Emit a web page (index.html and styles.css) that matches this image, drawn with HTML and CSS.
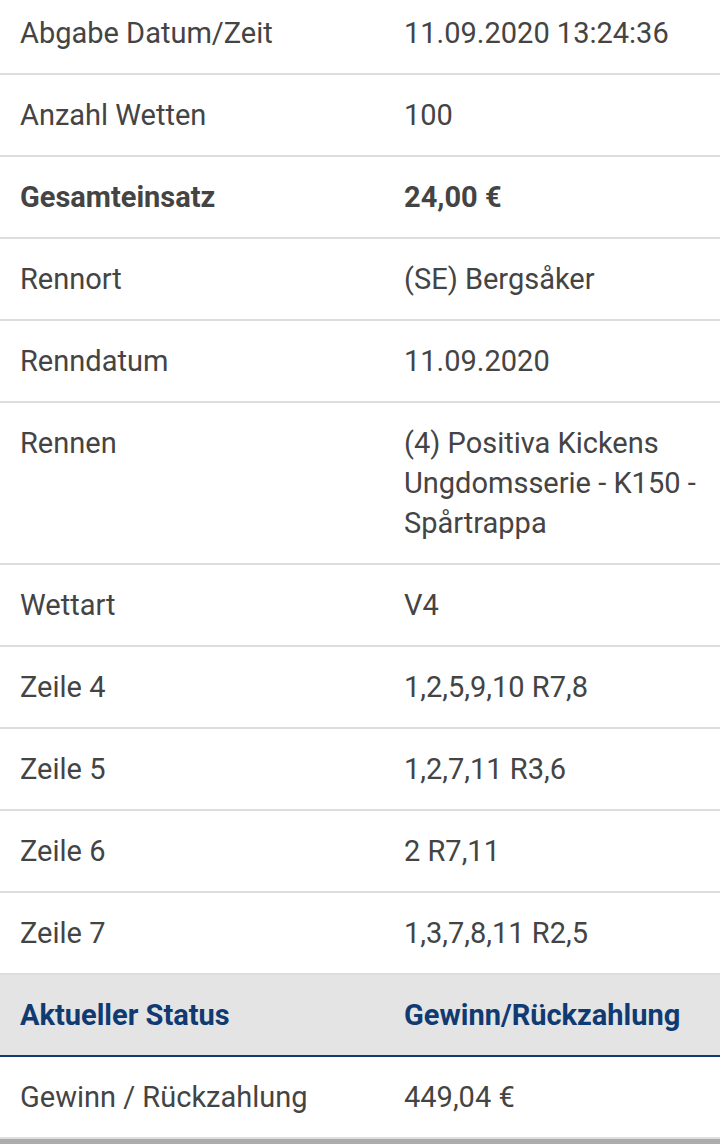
FILE: index.html
```html
<!DOCTYPE html>
<html lang="de">
<head>
<meta charset="utf-8">
<title>Wettschein</title>
<link rel="stylesheet" href="styles.css">
</head>
<body>
<div class="sheet">
  <div class="row"><div class="cell">Abgabe Datum/Zeit</div><div class="cell">11.09.2020 13:24:36</div></div>
  <div class="row"><div class="cell">Anzahl Wetten</div><div class="cell">100</div></div>
  <div class="row bold"><div class="cell">Gesamteinsatz</div><div class="cell">24,00 €</div></div>
  <div class="row"><div class="cell">Rennort</div><div class="cell">(SE) Bergsåker</div></div>
  <div class="row"><div class="cell">Renndatum</div><div class="cell">11.09.2020</div></div>
  <div class="row"><div class="cell">Rennen</div><div class="cell">(4) Positiva Kickens Ungdomsserie - K150 - Spårtrappa</div></div>
  <div class="row"><div class="cell">Wettart</div><div class="cell">V4</div></div>
  <div class="row"><div class="cell">Zeile 4</div><div class="cell">1,2,5,9,10 R7,8</div></div>
  <div class="row"><div class="cell">Zeile 5</div><div class="cell">1,2,7,11 R3,6</div></div>
  <div class="row"><div class="cell">Zeile 6</div><div class="cell">2 R7,11</div></div>
  <div class="row"><div class="cell">Zeile 7</div><div class="cell">1,3,7,8,11 R2,5</div></div>
  <div class="row head"><div class="cell">Aktueller Status</div><div class="cell">Gewinn/Rückzahlung</div></div>
  <div class="row"><div class="cell">Gewinn / Rückzahlung</div><div class="cell">449,04 €</div></div>
</div>
</body>
</html>
```
FILE: styles.css
```css
html {
  background: #acacac;
}
body {
  margin: 0;
  font-family: Roboto, "Liberation Sans", sans-serif;
  font-size: 29px;
  color: #444444;
}
.sheet {
  background: #ffffff;
  margin-top: -7px;
}
.row {
  display: grid;
  grid-template-columns: 384px 1fr;
  padding: 20px 0;
  line-height: 40px;
  border-bottom: 2px solid #dddddd;
}
.cell {
  padding: 0 20px;
}
.cell + .cell {
  padding-right: 8px;
}
.bold {
  font-weight: 700;
}
.head {
  background: #e4e4e4;
  color: #103a72;
  font-weight: 700;
  border-bottom-color: #103a72;
}
```
